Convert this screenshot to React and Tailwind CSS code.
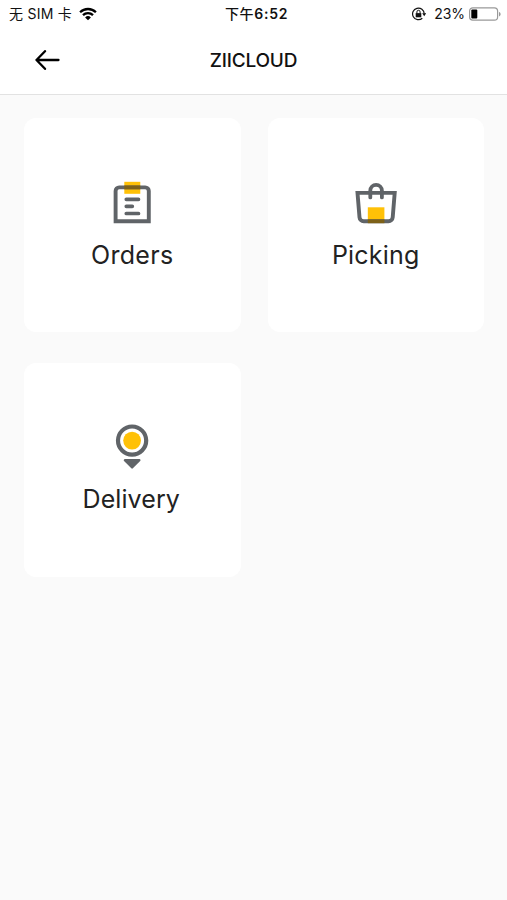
const OrdersIcon = () => (
  <svg viewBox="0 0 48 48" className="size-12" fill="none">
    <path d="M16.3 1.8h16v12h-16z" fill="#ffc107" />
    <path
      d="M7.6 41.3V11A3.6 3.6 0 0 1 11.2 7.400h26a3.6 3.6 0 0 1 3.6 3.600v30.300z"
      stroke="#606468"
      strokeWidth="3.9"
    />
    <path d="M16.3 5.5h16v3.800h-16z" fill="#7d6118" />
    <path
      d="M18.3 19.3h12.2M18.3 26.3h6M18.3 33.5h12.2"
      stroke="#606468"
      strokeWidth="3.7"
      strokeLinecap="round"
    />
  </svg>
);

const PickingIcon = () => (
  <svg viewBox="0 0 48 48" className="size-12" fill="none">
    <path d="M15.8 27.3h16.6v13H15.8z" fill="#ffc107" />
    <path
      d="M5.5 12.9h37.2l-2 24.500a4.2 4.2 0 0 1-4.2 3.900H11.7a4.2 4.2 0 0 1-4.2-3.900z"
      stroke="#606468"
      strokeWidth="3.9"
    />
    <path d="M15.8 39.4h16.6v3.800H15.8z" fill="#7d6118" />
    <path
      d="M18.3 17.4v-6.800a5.8 5.8 0 0 1 11.6 0v6.800"
      stroke="#606468"
      strokeWidth="3.8"
      strokeLinecap="round"
    />
  </svg>
);

const DeliveryIcon = () => (
  <svg viewBox="0 0 48 48" className="size-12" fill="none">
    <circle cx="24.1" cy="16.6" r="14.1" stroke="#606468" strokeWidth="4.2" />
    <circle cx="24.1" cy="16.6" r="8.9" fill="#ffc107" />
    <path
      d="M16.8 36.2h14.6l-7.3 7.300z"
      fill="#606468"
      stroke="#606468"
      strokeWidth="2.2"
      strokeLinejoin="round"
    />
  </svg>
);

const modules = [
  { label: "Orders", Icon: OrdersIcon, padding: "pt-[62px]", spacing: "tracking-[0.3px]" },
  { label: "Picking", Icon: PickingIcon, padding: "pt-[62px]", spacing: "tracking-[0.2px]" },
  { label: "Delivery", Icon: DeliveryIcon, padding: "pt-[61px]", spacing: "tracking-[0.1px] pr-[2px]" },
];

function StatusBar() {
  return (
    <div className="grid h-7 grid-cols-[1fr_auto_1fr] items-center pr-[6px] pl-[9px] text-[14px] leading-none">
      <div className="flex items-center">
        <span className="tracking-[0.25px] whitespace-nowrap">无 SIM 卡</span>
        <svg
          viewBox="0 0 18 14"
          className="mb-px ml-[7px] h-[14px] w-[18px]"
          fill="none"
          stroke="#000"
          strokeWidth="2.3"
        >
          <path d="M1.1 5.2a11.3 11.3 0 0 1 15.800 0M4 8.100a7.1 7.1 0 0 1 10 0" />
          <path d="M6.1 10.4a4.1 4.1 0 0 1 5.800 0L9 13.300z" fill="#000" stroke="none" />
        </svg>
      </div>
      <span className="pl-[3px] tracking-[0.7px]">
        <span className="font-medium">下午</span>
        <span className="font-semibold">6:52</span>
      </span>
      <div className="flex items-center justify-end">
        <svg viewBox="0 0 14 14" className="mr-[8px] mb-px size-[14px]" fill="none" stroke="#111">
          <path d="M12.2 6.8a5.8 5.8 0 1 0-1.900 4.400" strokeWidth="1.2" />
          <path d="M10.2 6.2h4l-2 3z" fill="#111" stroke="none" />
          <path d="M3.7 6.1h5.600v4.200H3.7z" fill="#111" stroke="none" />
          <path d="M4.9 6.4V4.900a1.600 1.600 0 0 1 3.200 0v1.500" />
        </svg>
        <span className="tracking-[-0.1px]">23%</span>
        <svg viewBox="0 0 32 14" className="mb-px ml-[4px] h-[14px] w-8" fill="none">
          <rect x="0.6" y="0.8" width="28" height="12.4" rx="3.2" stroke="#999" strokeWidth="1.2" />
          <rect x="2.3" y="2.4" width="6" height="9.2" rx="1" fill="#000" />
          <path d="M30 5v4.400c1-.4 1.600-1.200 1.600-2.200S31 5.400 30 5z" fill="#999" />
        </svg>
      </div>
    </div>
  );
}

export default function App() {
  return (
    <div className="min-h-screen bg-[#fafafa] font-[Inter,'Noto_Sans_CJK_SC',sans-serif] text-[#111]">
      <header className="h-[95px] border-b border-[#e2e2e2] bg-white">
        <StatusBar />
        <div className="grid h-16 grid-cols-[1fr_auto_1fr] items-center px-[35px]">
          <button type="button" aria-label="Back" className="w-[26px]">
            <svg
              viewBox="0 0 26 20"
              className="h-5 w-[26px]"
              fill="none"
              stroke="#000"
              strokeWidth="2.3"
              strokeLinecap="round"
              strokeLinejoin="round"
            >
              <path d="M23.5 10H1.5M10 1.2L1.5 10l8.500 8.800" />
            </svg>
          </button>
          <h1 className="pt-[3px] text-[19px] font-medium tracking-[-0.2px]">ZIICLOUD</h1>
        </div>
      </header>

      <main className="grid grid-cols-2 gap-x-[27px] gap-y-[31px] pt-[23px] pr-[23px] pl-6">
        {modules.map(({ label, Icon, padding, spacing }) => (
          <button
            key={label}
            type="button"
            className={`flex h-[214px] flex-col items-center rounded-xl bg-white ${padding}`}
          >
            <Icon />
            <span className={`mt-[11px] text-[25px] leading-8 text-[#222] ${spacing}`}>{label}</span>
          </button>
        ))}
      </main>
    </div>
  );
}
